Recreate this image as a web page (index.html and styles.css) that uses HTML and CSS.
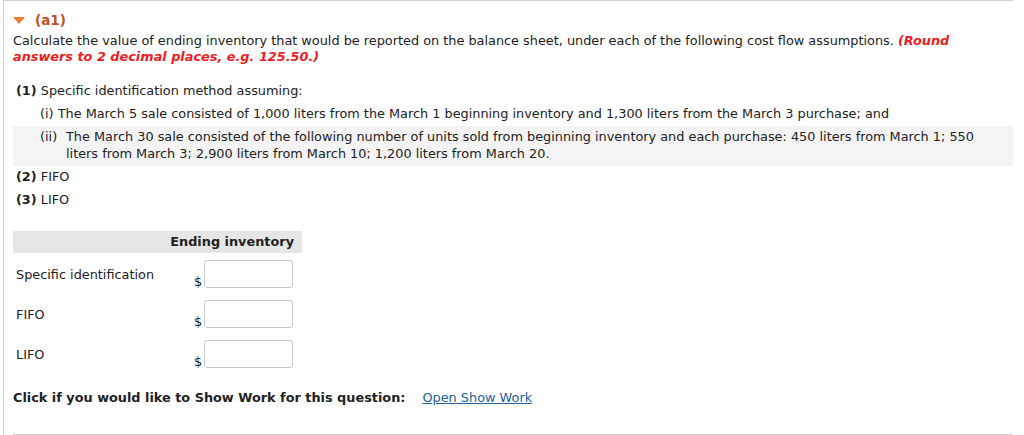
FILE: index.html
```html
<!DOCTYPE html>
<html>
<head>
<meta charset="utf-8">
<link rel="stylesheet" href="styles.css">
</head>
<body>
<div class="frame">
  <div class="part-title">
    <svg class="tri" width="12" height="8" viewBox="0 0 12 8"><polygon points="0,0 12,0 6,7" fill="#f47a36"/></svg>
    <span class="label">(a1)</span>
  </div>
  <p class="question">Calculate the value of ending inventory that would be reported on the balance sheet, under each of the following cost flow assumptions. <em class="round">(Round</em> <em class="round">answers to 2 decimal places, e.g. 125.50.)</em></p>
  <ul class="items">
    <li class="item"><b>(1)</b> Specific identification method assuming:</li>
    <li class="item sub">(i) The March 5 sale consisted of 1,000 liters from the March 1 beginning inventory and 1,300 liters from the March 3 purchase; and</li>
    <li class="item sub shaded"><span class="num">(ii)</span><span class="txt">The March 30 sale consisted of the following number of units sold from beginning inventory and each purchase: 450 liters from March 1; 550 liters from March 3; 2,900 liters from March 10; 1,200 liters from March 20.</span></li>
    <li class="item"><b>(2)</b> FIFO</li>
    <li class="item"><b>(3)</b> LIFO</li>
  </ul>
  <div class="answers">
    <div class="head-row">
      <div class="head">Ending inventory</div>
    </div>
    <div class="row">
      <div class="name">Specific identification</div>
      <div class="cell"><span class="dollar">$</span><span class="box"></span></div>
    </div>
    <div class="row">
      <div class="name">FIFO</div>
      <div class="cell"><span class="dollar">$</span><span class="box"></span></div>
    </div>
    <div class="row">
      <div class="name">LIFO</div>
      <div class="cell"><span class="dollar">$</span><span class="box"></span></div>
    </div>
  </div>
  <div class="showwork">
    <b>Click if you would like to Show Work for this question:</b>
    <a class="link" href="#">Open Show Work</a>
  </div>
  <div class="rule"></div>
</div>
</body>
</html>
```
FILE: styles.css
```css
html, body {
  margin: 0;
  padding: 0;
  background: #fff;
}
body {
  font-family: "DejaVu Sans", Verdana, sans-serif;
  font-size: 12.85px;
  color: #222;
}
.frame {
  margin-left: 3px;
  width: 1010px;
  border-left: 1px solid #c9d1dc;
  border-top: 1px solid #c9d1dc;
  padding: 11px 0 0 9px;
  box-sizing: border-box;
  height: 435px;
  overflow: hidden;
}
.part-title {
  display: flex;
  align-items: center;
  gap: 10px;
  height: 16px;
  line-height: 16px;
}
.tri {
  display: block;
  margin-top: 1px;
}
.label {
  font-weight: bold;
  color: #c4512b;
  font-size: 13.5px;
}
.question {
  margin: 5px 0 0 0;
  line-height: 16px;
  padding-right: 50px;
}
.round {
  color: #ee1c25;
  font-weight: bold;
  font-style: italic;
}
.items {
  list-style: none;
  margin: 15px 0 0 0;
  padding: 0;
}
.item {
  line-height: 17px;
  padding: 2px 0 4px 3px;
}
.sub {
  padding-left: 27px;
}
.shaded {
  background: #f4f4f4;
  display: flex;
}
.num {
  flex: none;
  width: 26px;
}
.txt {
  padding-right: 10px;
}
.answers {
  margin-top: 19px;
  width: 289px;
}
.head-row {
  display: flex;
  justify-content: flex-end;
  background: #e6e6e6;
  height: 22px;
  line-height: 22px;
}
.head {
  font-weight: bold;
  white-space: nowrap;
  padding-right: 8px;
}
.row {
  display: grid;
  grid-template-columns: 170px 119px;
  height: 40px;
}
.name {
  padding-top: 13px;
  padding-left: 3px;
  line-height: 17px;
}
.cell {
  display: flex;
  align-items: flex-end;
  padding-left: 11px;
  height: 35px;
}
.dollar {
  line-height: 14px;
  margin-right: 2px;
  margin-bottom: -1px;
}
.box {
  display: block;
  width: 87px;
  height: 26px;
  border: 1px solid #c8c8c8;
  border-radius: 3px;
  background: #fff;
}
.showwork {
  margin-top: 16px;
  line-height: 17px;
  display: flex;
  gap: 17px;
}
.link {
  color: #21609e;
  text-decoration: underline;
}
.rule {
  margin-top: 28px;
  border-top: 1px solid #c9d1dc;
}
```
